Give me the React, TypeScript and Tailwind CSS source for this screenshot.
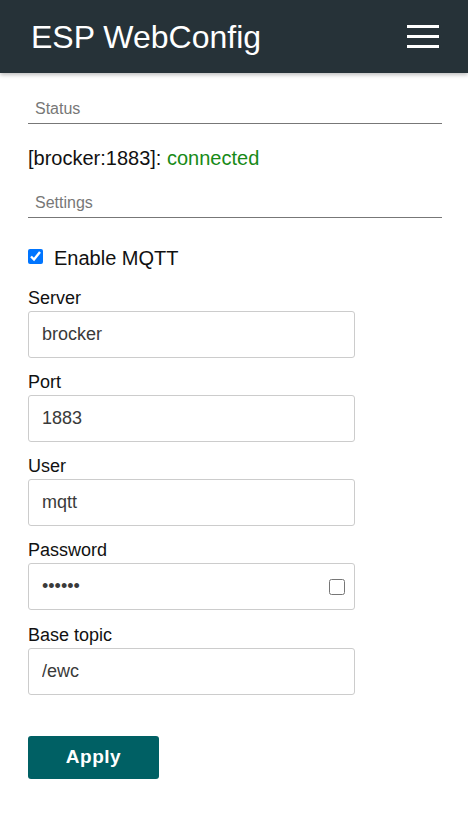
import React from "react";

const font = { fontFamily: '"Liberation Sans", Arial, sans-serif' };

function Field({ label, value, type = "text" }: { label: string; value: string; type?: string }) {
  return (
    <div className="mt-[14px] first:mt-0">
      <label className="block text-[18px] leading-[21px] text-[#111] mb-[2px]">{label}</label>
      <input
        type={type}
        defaultValue={value}
        className="block w-[327px] h-[47px] border border-[#ccc] rounded-[3px] pl-[13px] text-[18px] text-[#3a3a3a] outline-none bg-white"
      />
    </div>
  );
}

export default function App() {
  return (
    <div className="min-h-[831px] bg-white" style={font}>
      <header className="h-[73px] bg-[#263238] flex items-center justify-between pl-[31px] pr-[29px] shadow-[0_2px_4px_rgba(0,0,0,0.25)]">
        <h1 className="text-white text-[32px] leading-none">ESP WebConfig</h1>
        <div className="flex flex-col gap-[7px]">
          <span className="block w-[32px] h-[3px] bg-white" />
          <span className="block w-[32px] h-[3px] bg-white" />
          <span className="block w-[32px] h-[3px] bg-white" />
        </div>
      </header>
      <main className="pl-[28px] pr-[26px]">
        <div className="mt-[26px] border-b border-[#777] pb-[4px] pl-[7px] text-[16px] leading-[20px] text-[#777]">Status</div>
        <div className="mt-[22px] text-[20px] leading-[24px] text-[#111]">
          [brocker:1883]: <span className="text-[#178a17]">connected</span>
        </div>
        <div className="mt-[23px] border-b border-[#777] pb-[4px] pl-[7px] text-[16px] leading-[20px] text-[#777]">Settings</div>
        <label className="mt-[28px] flex items-center h-[24px] text-[20px] text-[#111]">
          <input type="checkbox" defaultChecked className="w-[15px] h-[15px] m-0 mr-[11px] accent-[#0075ff] -translate-y-[2px]" />
          Enable MQTT
        </label>
        <div className="mt-[18px]">
          <Field label="Server" value="brocker" />
          <Field label="Port" value="1883" />
          <Field label="User" value="mqtt" />
          <div className="mt-[14px]">
            <label className="block text-[18px] leading-[21px] text-[#111] mb-[2px]">Password</label>
            <div className="flex items-center w-[327px] h-[47px] border border-[#ccc] rounded-[3px] pl-[13px] pr-[9px] bg-white">
              <input
                type="password"
                defaultValue="secret"
                className="flex-1 min-w-0 h-full text-[18px] text-[#3a3a3a] outline-none bg-transparent"
              />
              <input type="checkbox" className="w-[16px] h-[16px] m-0" />
            </div>
          </div>
          <div className="mt-[15px]">
            <label className="block text-[18px] leading-[21px] text-[#111] mb-[2px]">Base topic</label>
            <input
              type="text"
              defaultValue="/ewc"
              className="block w-[327px] h-[47px] border border-[#ccc] rounded-[3px] pl-[13px] text-[18px] text-[#3a3a3a] outline-none bg-white"
            />
          </div>
        </div>
        <button className="mt-[41px] w-[131px] h-[43px] bg-[#006064] rounded-[3px] text-white font-bold text-[19px] tracking-[0.5px]">
          Apply
        </button>
      </main>
    </div>
  );
}
